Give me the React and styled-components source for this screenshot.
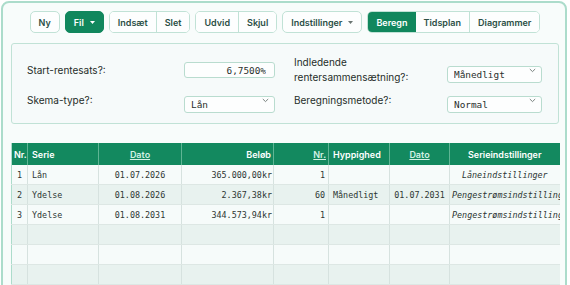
import styled, { createGlobalStyle } from "styled-components";

const GlobalStyle = createGlobalStyle`
  html, body {
    margin: 0;
    padding: 0;
    background: #ffffff;
    overflow: hidden;
  }
  body {
    font-family: Inter, "Noto Sans", sans-serif;
    color: #1f2d29;
  }
`;

const Shell = styled.div`
  box-sizing: border-box;
  width: 566px;
  margin: 1px 0 0 1px;
  padding: 8px 6px 0 8px;
  border: 2px solid #acdccb;
  border-radius: 8px;
  background: #f8fcfb;
  min-height: 400px;
`;

const Toolbar = styled.div`
  display: flex;
  justify-content: center;
  gap: 5px;
  height: 22px;
  margin-bottom: 10px;
`;

const Group = styled.div`
  display: flex;
  border: 1px solid #c1e2d6;
  border-radius: 5px;
  overflow: hidden;
  background: #fdfefe;
`;

const Button = styled.button`
  display: flex;
  align-items: center;
  gap: 6px;
  box-sizing: border-box;
  height: ${(p) => (p.$grouped ? "20px" : "22px")};
  padding: 0 8px;
  border: ${(p) => (p.$grouped ? "none" : "1px solid #c1e2d6")};
  border-left: ${(p) => (p.$divider ? "1px solid #c1e2d6" : p.$grouped ? "none" : "1px solid #c1e2d6")};
  border-radius: ${(p) => (p.$grouped ? "0" : "5px")};
  background: ${(p) => (p.$active ? "#11875d" : "#fdfefe")};
  color: ${(p) => (p.$active ? "#ffffff" : "#2b4e45")};
  border-color: ${(p) => (p.$active && !p.$grouped ? "#11875d" : "#c1e2d6")};
  font-family: Inter, sans-serif;
  font-size: 9px;
  font-weight: 600;
  line-height: 1;
  cursor: pointer;
`;

const Caret = ({ color }) => (
  <svg width="5" height="3" viewBox="0 0 5 3">
    <path d="M0 0 L5 0 L2.5 3 Z" fill={color} />
  </svg>
);

const Settings = styled.div`
  display: grid;
  grid-template-columns: 1fr 1fr;
  column-gap: 19px;
  row-gap: 7px;
  padding: 11px 16px 14px 15px;
  margin-bottom: 19px;
  border: 1px solid #c1e2d6;
  border-radius: 3px;
  background: #f6fafa;
`;

const Field = styled.div`
  display: flex;
  align-items: center;
  justify-content: space-between;
  gap: 10px;
`;

const Label = styled.label`
  font-size: 10px;
  line-height: 15px;
  color: #1f2d29;
`;

const TextInput = styled.input`
  box-sizing: border-box;
  width: ${(p) => p.$w}px;
  height: 16px;
  padding: 0 8px;
  border: 1px solid #b9dccf;
  border-radius: 3px;
  background: #fdfefe;
  font-family: "DejaVu Sans Mono", monospace;
  font-size: 9.4px;
  color: #2a2f2d;
  text-align: right;
  outline: none;
`;

const SelectWrap = styled.div`
  position: relative;
  width: ${(p) => p.$w}px;
  height: 17px;
`;

const SelectBox = styled.select`
  box-sizing: border-box;
  width: 100%;
  height: 100%;
  padding: 0 0 0 6px;
  border: 1px solid #b9dccf;
  border-radius: 3px;
  background: #fdfefe;
  appearance: none;
  font-family: "DejaVu Sans Mono", monospace;
  font-size: 9.4px;
  color: #2a2f2d;
  outline: none;
`;

const Chevron = styled.svg`
  position: absolute;
  right: 6px;
  top: 6px;
  pointer-events: none;
`;

const Select = ({ value, w }) => (
  <SelectWrap $w={w}>
    <SelectBox defaultValue={value}>
      <option>{value}</option>
    </SelectBox>
    <Chevron width="7" height="5" viewBox="0 0 7 5">
      <path d="M0.8 1 L3.5 3.6 L6.2 1" fill="none" stroke="#6b7572" strokeWidth="0.9" />
    </Chevron>
  </SelectWrap>
);

const Table = styled.table`
  width: 548px;
  table-layout: fixed;
  border-collapse: collapse;
  border-left: 1px solid #acdccb;
`;

const Th = styled.th`
  height: 22px;
  padding: 0 ${(p) => (p.$pad ?? 3)}px;
  background: #13895f;
  color: #ffffff;
  border-left: 1px solid #5fb594;
  font-family: Inter, sans-serif;
  font-size: 9px;
  font-weight: 600;
  text-align: ${(p) => p.$align || "left"};
  white-space: nowrap;
  overflow: hidden;
  &:first-child {
    border-left: none;
  }
`;

const SortLink = styled.span`
  color: #d4f1e5;
  text-decoration: underline;
  text-underline-offset: 1px;
`;

const Row = styled.tr`
  background: ${(p) => (p.$alt ? "#e8f2ef" : "#f6fbfa")};
`;

const Td = styled.td`
  height: 19px;
  padding: 0 ${(p) => (p.$pad ?? 3)}px;
  border-left: 1px solid #d6e2df;
  border-bottom: 1px solid #dde7e4;
  font-family: "DejaVu Sans Mono", monospace;
  font-size: 8.4px;
  font-style: ${(p) => (p.$italic ? "italic" : "normal")};
  color: #2d3633;
  text-align: ${(p) => p.$align || "left"};
  white-space: nowrap;
  overflow: hidden;
  &:first-child {
    border-left: none;
  }
`;

const widths = [16, 71, 83, 92, 55, 61, 60, 110];

const rows = [
  ["1", "Lån", "01.07.2026", "365.000,00kr", "1", "", "", "Låneindstillinger"],
  ["2", "Ydelse", "01.08.2026", "2.367,38kr", "60", "Månedligt", "01.07.2031", "Pengestrømsindstillinger"],
  ["3", "Ydelse", "01.08.2031", "344.573,94kr", "1", "", "", "Pengestrømsindstillinger"],
];

const aligns = ["left", "left", "center", "right", "right", "left", "center", "center"];
const pads = [5, 4, 3, 1, 3, 4, 2, 2];

export default function App() {
  const empty = Array.from({ length: 6 }, () => Array(8).fill(""));
  const all = [...rows, ...empty];

  return (
    <>
      <GlobalStyle />
      <Shell>
        <Toolbar>
          <Button>Ny</Button>
          <Button $active>
            Fil <Caret color="#ffffff" />
          </Button>
          <Group>
            <Button $grouped>Indsæt</Button>
            <Button $grouped $divider>Slet</Button>
          </Group>
          <Group>
            <Button $grouped>Udvid</Button>
            <Button $grouped $divider>Skjul</Button>
          </Group>
          <Button>
            Indstillinger <Caret color="#6b7572" />
          </Button>
          <Group>
            <Button $grouped $active>Beregn</Button>
            <Button $grouped>Tidsplan</Button>
            <Button $grouped $divider>Diagrammer</Button>
          </Group>
        </Toolbar>

        <Settings>
          <Field>
            <Label>Start-rentesats?:</Label>
            <TextInput $w={91} defaultValue="6,7500%" />
          </Field>
          <Field>
            <Label>
              Indledende
              <br />
              rentersammensætning?:
            </Label>
            <Select value="Månedligt" w={95} />
          </Field>
          <Field>
            <Label>Skema-type?:</Label>
            <Select value="Lån" w={91} />
          </Field>
          <Field>
            <Label>Beregningsmetode?:</Label>
            <Select value="Normal" w={95} />
          </Field>
        </Settings>

        <Table>
          <colgroup>
            {widths.map((w, i) => (
              <col key={i} style={{ width: w }} />
            ))}
          </colgroup>
          <thead>
            <tr>
              <Th $pad={2}>Nr.</Th>
              <Th $pad={4}>Serie</Th>
              <Th $align="center">
                <SortLink>Dato</SortLink>
              </Th>
              <Th $align="right" $pad={2}>Beløb</Th>
              <Th $align="right" $pad={2}>
                <SortLink>Nr.</SortLink>
              </Th>
              <Th $pad={4}>Hyppighed</Th>
              <Th $align="center">
                <SortLink>Dato</SortLink>
              </Th>
              <Th $align="center">Serieindstillinger</Th>
            </tr>
          </thead>
          <tbody>
            {all.map((r, i) => (
              <Row key={i} $alt={i % 2 === 1}>
                {r.map((c, j) => (
                  <Td key={j} $align={aligns[j]} $pad={pads[j]} $italic={j === 7}>
                    {c}
                  </Td>
                ))}
              </Row>
            ))}
          </tbody>
        </Table>
      </Shell>
    </>
  );
}
